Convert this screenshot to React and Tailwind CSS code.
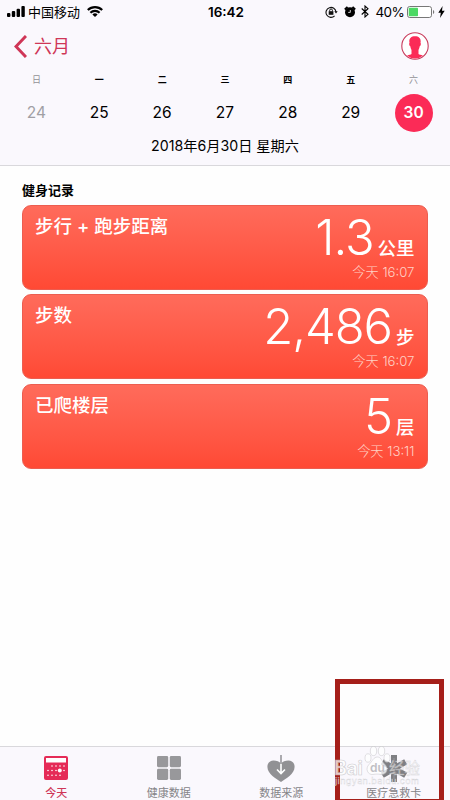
import React from 'react';

const days = [
  { label: '日', date: 24, muted: true },
  { label: '一', date: 25 },
  { label: '二', date: 26 },
  { label: '三', date: 27 },
  { label: '四', date: 28 },
  { label: '五', date: 29 },
  { label: '六', date: 30, muted: true, selected: true },
];

const records = [
  { title: '步行 + 跑步距离', value: '1.3', unit: '公里', time: '今天 16:07' },
  { title: '步数', value: '2,486', unit: '步', time: '今天 16:07' },
  { title: '已爬楼层', value: '5', unit: '层', time: '今天 13:11' },
];

const SignalIcon = () => (
  <svg className="h-[11px] w-[18px]" viewBox="0 0 18 11" fill="#000">
    <rect x="0" y="7" width="3.4" height="4" rx="1" />
    <rect x="4.8" y="5" width="3.4" height="6" rx="1" />
    <rect x="9.6" y="2.8" width="3.4" height="8.2" rx="1" />
    <rect x="14.4" y="0" width="3.4" height="11" rx="1" />
  </svg>
);

const WifiIcon = () => (
  <svg className="h-[11px] w-[16px]" viewBox="0 0 16 11" fill="none" stroke="#000" strokeWidth="2.1">
    <path d="M.8 4.1a10.2 10.2 0 0 1 14.4 0" />
    <path d="M3.4 6.8a6.5 6.5 0 0 1 9.2 0" />
    <path d="M8 11 5.4 8.5a3.7 3.7 0 0 1 5.2 0z" fill="#000" stroke="none" />
  </svg>
);

const RotationLockIcon = () => (
  <svg className="h-[12px] w-[13px]" viewBox="0 0 13 12" fill="none" stroke="#111">
    <path d="M9.6 9.9A5 5 0 1 1 11 6" strokeWidth="1.1" />
    <path d="M9.3 5.2h3.4L11 7.4z" fill="#111" stroke="none" />
    <rect x="3.7" y="5.2" width="4.7" height="3.6" fill="#111" stroke="none" />
    <path d="M4.7 5.4V4.3a1.35 1.35 0 0 1 2.7 0v1.1" strokeWidth="1" />
  </svg>
);

const AlarmIcon = () => (
  <svg className="h-[12px] w-[12px]" viewBox="0 0 12 12">
    <circle cx="6" cy="6.3" r="5" fill="#000" />
    <path d="M.8 3.5 3.5.8M8.5.8l2.7 2.7" stroke="#000" strokeWidth="1.8" />
    <path d="M6.3 4v2.4H4.2" stroke="#fff" strokeWidth=".8" fill="none" />
  </svg>
);

const BluetoothIcon = () => (
  <svg className="h-[13px] w-[8px]" viewBox="0 0 8 13" fill="none" stroke="#000" strokeWidth="1.1">
    <path d="M.7 3.5 7 9.3 4 12V1l3 2.7L.7 9.5" />
  </svg>
);

const BatteryIcon = () => (
  <svg className="h-[12px] w-[28px]" viewBox="0 0 28 12">
    <rect x=".5" y=".5" width="24" height="11" rx="2.2" fill="#fff" stroke="#777" />
    <rect x="1.7" y="1.7" width="9.3" height="8.6" rx=".8" fill="#4cd964" />
    <path d="M26 4v4a2.2 2.2 0 0 0 0-4z" fill="#777" />
  </svg>
);

const BoltIcon = () => (
  <svg className="h-[12px] w-[7px]" viewBox="0 0 7 12">
    <path d="M4.6 0 .3 6.7h2.5L2 12l4.7-7.2H4z" fill="#000" />
  </svg>
);

const ProfileIcon = () => (
  <svg className="h-[28px] w-[28px]" viewBox="0 0 28 28">
    <circle cx="14" cy="14" r="13.2" fill="#fff" stroke="#c83c5c" strokeWidth="1.1" />
    <path
      d="M14 4.2c-3.8 0-5.8 2-5.7 5.3l.2 1.5c-.8.2-.3 3 .8 3.3.3 1.7.8 2.9 1.2 3.7V22c-.8.8-2.4.8-4.4 1.4A12.4 12.4 0 0 0 14 26.6a12.4 12.4 0 0 0 7.9-3.2c-2-.6-3.6-.6-4.4-1.4v-4c.4-.8.9-2 1.2-3.7 1.100-.3 1.600-3.100.8-3.300l.2-1.500c.1-3.300-1.900-5.300-5.700-5.300z"
      fill="#fb2b57"
    />
  </svg>
);

const CalendarIcon = () => (
  <svg className="h-6 w-6" viewBox="0 0 24 24">
    <rect width="24" height="24" rx="2" fill="#e52b57" />
    <rect x="2" y="2" width="20" height="4.5" fill="#fff" />
    <g fill="#fff">
      {[8, 12, 16, 20].map((x) => <circle key={x} cx={x} cy="10" r=".8" />)}
      {[4, 8, 12, 20].map((x) => <circle key={x} cx={x} cy="14.5" r=".8" />)}
      {[4, 8, 12, 16].map((x) => <circle key={x} cx={x} cy="19.3" r=".8" />)}
      <circle cx="15.8" cy="14.5" r="2" />
    </g>
  </svg>
);

const GridIcon = () => (
  <svg className="h-6 w-6" viewBox="0 0 24 24" fill="#98989b">
    <rect width="11.2" height="11.2" rx="1.4" />
    <rect x="12.8" width="11.2" height="11.2" rx="1.4" />
    <rect y="12.8" width="11.2" height="11.2" rx="1.4" />
    <rect x="12.8" y="12.8" width="11.2" height="11.2" rx="1.4" />
  </svg>
);

const HeartIcon = () => (
  <svg className="h-[27px] w-[28px]" viewBox="0 0 28 27" fill="none">
    <path
      d="M14 27C9.5 23.8.4 19.2.4 11.8.4 7.8 3.1 5.5 6.5 5.5c3.3 0 5.9 1 7.5 3 1.6-2 4.2-3 7.5-3 3.4 0 6.1 2.3 6.1 6.3C27.6 19.2 18.5 23.8 14 27z"
      fill="#919194"
    />
    <path d="M14 8v10M10 14.5l4 4 4-4" stroke="#fff" strokeWidth="1.6" />
    <path d="M14 0v9" stroke="#919194" strokeWidth="1.5" />
  </svg>
);

const MedicalIcon = () => (
  <svg className="h-[27px] w-[26px]" viewBox="0 0 26 27" fill="#7f7f83">
    <rect x="10" y="0" width="6" height="27" />
    <rect x="10" y="0" width="6" height="27" transform="rotate(60 13 13.5)" />
    <rect x="10" y="0" width="6" height="27" transform="rotate(-60 13 13.5)" />
    <path d="M13 3v21M11.5 8c4 1 4 3 1.5 4s-3 3 0 4 2 3 0 4" fill="none" stroke="#a0a0a4" strokeWidth=".8" />
  </svg>
);

const tabs = [
  { label: '今天', icon: <CalendarIcon />, active: true },
  { label: '健康数据', icon: <GridIcon /> },
  { label: '数据来源', icon: <HeartIcon /> },
  { label: '医疗急救卡', icon: <MedicalIcon /> },
];

const StatusBar = () => (
  <div className="grid h-[23px] grid-cols-[1fr_auto_1fr] items-center pl-[7px] pr-[5px]">
    <div className="flex items-center">
      <SignalIcon />
      <span className="ml-[3px] text-[13px] leading-5">中国移动</span>
      <span className="ml-[7px]"><WifiIcon /></span>
    </div>
    <span className="text-[13.5px] font-semibold leading-5">16:42</span>
    <div className="flex items-center justify-end">
      <RotationLockIcon />
      <span className="ml-[6px]"><AlarmIcon /></span>
      <span className="ml-[5px]"><BluetoothIcon /></span>
      <span className="ml-[7px] mr-[3px] text-[13.5px] leading-5 tracking-[-0.7px]">40%</span>
      <BatteryIcon />
      <span className="ml-[3px]"><BoltIcon /></span>
    </div>
  </div>
);

const Watermark = () => (
  <div className="pointer-events-none absolute left-[334px] top-[745px] h-[44px] w-[92px]">
    <svg className="h-full w-full overflow-visible" viewBox="0 0 92 44">
      <g fill="#fff" stroke="#bdbdc1" strokeWidth=".6" opacity=".75">
        <ellipse cx="34" cy="13" rx="3" ry="4.2" />
        <ellipse cx="39.5" cy="6" rx="3.2" ry="4.6" />
        <ellipse cx="47.5" cy="6" rx="3.2" ry="4.6" />
        <ellipse cx="53" cy="13" rx="3" ry="4.2" />
        <path d="M43.5 12c-4 0-5 4-8.5 7.500-4 4-1.500 10.500 4 10 3-.6 5-.6 8 0 6 .5 8-6 4-10-3.500-3.500-4-7.500-7.500-7.500z" />
        <text x="0" y="29.5" fontSize="19.5" fontWeight="700" letterSpacing="-.3">Bai</text>
      </g>
      <text x="55" y="29" fontSize="15.5" fill="#fff" stroke="#bdbdc1" strokeWidth=".4" opacity=".6">经验</text>
      <text x="36" y="27" fontSize="12" fontWeight="600" fill="#c0c0c4">du</text>
      <text x="1" y="39" fontSize="9" fill="#fff" stroke="#c4c4c8" strokeWidth=".3" textLength="84" opacity=".75">
        jingyan.baidu.com
      </text>
    </svg>
  </div>
);

const RecordCard = ({ title, value, unit, time }) => (
  <div className="flex h-[85px] justify-between rounded-[9px] border border-[#ec5d50] bg-linear-to-b from-[#ff6b5b] to-[#ff4934] pl-[12px] pr-[12.5px] text-white">
    <h3 className="mt-[8px] text-[18.5px] font-medium leading-6">{title}</h3>
    <div className="flex flex-col items-end">
      <div className="mt-[7px] flex h-[50px] items-baseline">
        <span className="text-[49px] font-[260] leading-[50px] tracking-[-1.1px]">{value}</span>
        <span className="ml-1 text-[18.5px] font-medium leading-6">{unit}</span>
      </div>
      <p className="text-[13.2px] font-light leading-[18px] text-[#ffd0c4]">{time}</p>
    </div>
  </div>
);

const App = () => {
  return (
    <div className="relative flex h-[800px] w-[450px] flex-col overflow-hidden bg-[#fefefe] font-['Inter','Noto_Sans_CJK_SC',sans-serif] text-black">
      {/* Header with the week strip */}
      <header className="h-[166px] border-b border-[#d9d8dc] bg-[#faf8fd]">
        <StatusBar />
        <div className="flex h-[46px] items-center justify-between pl-[14px] pr-[21px]">
          <button className="flex items-center text-[#cf3657]">
            <svg className="h-[23px] w-[13px]" viewBox="0 0 13 23" fill="none" stroke="currentColor" strokeWidth="3">
              <path d="M12 1 2 11.5 12 22" />
            </svg>
            <span className="ml-[7px] mt-px text-[18px] leading-6">六月</span>
          </button>
          <ProfileIcon />
        </div>
        <div className="mx-[5px] grid grid-cols-7 text-center">
          {days.map((day) => (
            <div key={day.date} className="flex flex-col items-center">
              <span className={`mt-[3px] h-4 text-[9px] leading-4 ${day.muted ? 'text-[#929196]' : 'font-bold'}`}>
                {day.label}
              </span>
              <span
                className={`mt-[6px] flex h-[38px] w-[38px] items-center justify-center rounded-full text-[15.5px] ${
                  day.selected ? 'bg-[#fb2b57] font-semibold text-white' : day.muted ? 'text-[#a09fa4]' : ''
                }`}
              >
                {day.date}
              </span>
            </div>
          ))}
        </div>
        <p className="mt-[4px] text-center text-[14.2px] leading-5">2018年6月30日 星期六</p>
      </header>

      {/* Fitness records */}
      <main className="flex-1 px-[22px] pt-[14px]">
        <h2 className="mb-[5px] text-[13px] font-bold leading-5">健身记录</h2>
        <div className="flex flex-col gap-[4.3px]">
          {records.map((record) => (
            <RecordCard key={record.title} {...record} />
          ))}
        </div>
      </main>

      {/* Tab bar */}
      <nav className="grid h-[54px] grid-cols-4 border-t border-[#d9d8dc] bg-[#faf8fd]">
        {tabs.map((tab) => (
          <button key={tab.label} className="flex flex-col items-center">
            <span className="mt-[7px] flex h-[28px] items-center justify-center">{tab.icon}</span>
            <span className={`mt-[2px] text-[11px] leading-[18px] ${tab.active ? 'font-medium text-[#cf3657]' : 'text-[#858488]'}`}>
              {tab.label}
            </span>
          </button>
        ))}
      </nav>

      <div className="absolute left-[335px] top-[679px] h-[125px] w-[109px] border-[5px] border-[#a51f1a]"></div>
      <Watermark />
    </div>
  );
};

export default App;
